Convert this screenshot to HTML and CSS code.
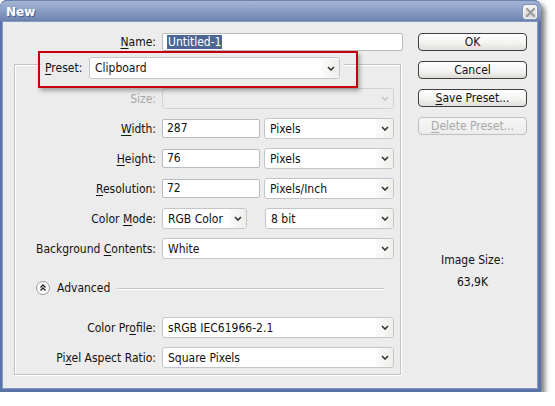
FILE: index.html
```html
<!DOCTYPE html>
<html>
<head>
<meta charset="utf-8">
<title>New</title>
<link rel="stylesheet" href="styles.css">
</head>
<body>
<div class="window">
  <div class="titlebar">
    <span class="title">New</span>
    <span class="close"><svg width="9" height="9" viewBox="0 0 9 9"><path d="M1 1L8 8M8 1L1 8" stroke="#9a9a9a" stroke-width="2" stroke-linecap="square"/></svg></span>
  </div>
  <div class="frame">
    <div class="client">
      <div class="main">
        <div class="row name-row">
          <span class="lbl name-lbl"><u>N</u>ame:</span>
          <div class="input name-input"><span class="selected">Untitled-1</span></div>
        </div>
        <div class="group">
          <div class="legend">
            <span class="preset-lbl"><u>P</u>reset:</span>
            <div class="select preset-sel"><span class="val">Clipboard</span><span class="arrow"><svg width="8" height="5" viewBox="0 0 8 5"><path d="M1 1L4 4L7 1" fill="none" stroke="#333" stroke-width="1.6"/></svg></span></div>
            <div class="annot"></div>
          </div>
          <div class="row first">
            <span class="lbl disabled">Size:</span>
            <div class="select full disabled"><span class="val"></span><span class="arrow"><svg width="8" height="5" viewBox="0 0 8 5"><path d="M1 1L4 4L7 1" fill="none" stroke="#c4c4c4" stroke-width="1.6"/></svg></span></div>
          </div>
          <div class="row">
            <span class="lbl"><u>W</u>idth:</span>
            <div class="input num">287</div>
            <div class="select unit"><span class="val">Pixels</span><span class="arrow"><svg width="8" height="5" viewBox="0 0 8 5"><path d="M1 1L4 4L7 1" fill="none" stroke="#333" stroke-width="1.6"/></svg></span></div>
          </div>
          <div class="row">
            <span class="lbl"><u>H</u>eight:</span>
            <div class="input num">76</div>
            <div class="select unit"><span class="val">Pixels</span><span class="arrow"><svg width="8" height="5" viewBox="0 0 8 5"><path d="M1 1L4 4L7 1" fill="none" stroke="#333" stroke-width="1.6"/></svg></span></div>
          </div>
          <div class="row">
            <span class="lbl"><u>R</u>esolution:</span>
            <div class="input num">72</div>
            <div class="select unit"><span class="val">Pixels/Inch</span><span class="arrow"><svg width="8" height="5" viewBox="0 0 8 5"><path d="M1 1L4 4L7 1" fill="none" stroke="#333" stroke-width="1.6"/></svg></span></div>
          </div>
          <div class="row">
            <span class="lbl">Color <u>M</u>ode:</span>
            <div class="select mode"><span class="val">RGB Color</span><span class="arrow"><svg width="8" height="5" viewBox="0 0 8 5"><path d="M1 1L4 4L7 1" fill="none" stroke="#333" stroke-width="1.6"/></svg></span></div>
            <div class="select bits"><span class="val">8 bit</span><span class="arrow"><svg width="8" height="5" viewBox="0 0 8 5"><path d="M1 1L4 4L7 1" fill="none" stroke="#333" stroke-width="1.6"/></svg></span></div>
          </div>
          <div class="row">
            <span class="lbl">Background <u>C</u>ontents:</span>
            <div class="select full"><span class="val">White</span><span class="arrow"><svg width="8" height="5" viewBox="0 0 8 5"><path d="M1 1L4 4L7 1" fill="none" stroke="#333" stroke-width="1.6"/></svg></span></div>
          </div>
          <div class="advanced">
            <span class="adv-icon"><svg width="14" height="14" viewBox="0 0 14 14"><circle cx="7" cy="7" r="6.5" fill="#fafafa" stroke="#9a9a9a"/><path d="M4.5 6.5L7 4L9.5 6.5M4.5 9.5L7 7L9.5 9.5" fill="none" stroke="#222" stroke-width="1.3"/></svg></span>
            <span class="adv-text">Advanced</span>
            <span class="adv-line"></span>
          </div>
          <div class="row adv-first">
            <span class="lbl">Color Pr<u>o</u>file:</span>
            <div class="select full"><span class="val">sRGB IEC61966-2.1</span><span class="arrow"><svg width="8" height="5" viewBox="0 0 8 5"><path d="M1 1L4 4L7 1" fill="none" stroke="#333" stroke-width="1.6"/></svg></span></div>
          </div>
          <div class="row">
            <span class="lbl">Pi<u>x</u>el Aspect Ratio:</span>
            <div class="select full"><span class="val">Square Pixels</span><span class="arrow"><svg width="8" height="5" viewBox="0 0 8 5"><path d="M1 1L4 4L7 1" fill="none" stroke="#333" stroke-width="1.6"/></svg></span></div>
          </div>
        </div>
      </div>
      <div class="side">
        <div class="btn">OK</div>
        <div class="btn">Cancel</div>
        <div class="btn"><u>S</u>ave Preset...</div>
        <div class="btn disabled"><u>D</u>elete Preset...</div>
        <div class="imgsize">Image Size:</div>
        <div class="imgval">63,9K</div>
      </div>
    </div>
  </div>
</div>
</body>
</html>
```

FILE: styles.css
```css
* { box-sizing: border-box; }
body {
  margin: 0;
  background: #fff;
  font-family: "DejaVu Sans Condensed", "DejaVu Sans", sans-serif;
  font-stretch: condensed;
  font-size: 12px;
  line-height: 14px;
  color: #111;
}
u { text-decoration: underline; text-underline-offset: 2px; }

.window {
  width: 541px;
  height: 392px;
  display: flex;
  flex-direction: column;
  border-radius: 7px 7px 0 0;
  box-shadow: 4px 4px 5px rgba(0,0,0,0.5);
  background: #5a72a5;
}
.titlebar {
  height: 22px;
  flex: none;
  border-radius: 7px 7px 0 0;
  background: linear-gradient(#a4b4d4, #8c9fc4 45%, #6f85b2 90%, #5c73a4);
  border-top: 1px solid #6a80ad;
  display: flex;
  align-items: center;
  padding: 0 4px 0 6px;
}
.title {
  flex: 1;
  color: #fff;
  font-family: "DejaVu Sans", sans-serif;
  font-stretch: normal;
  font-weight: bold;
  font-size: 12px;
  text-shadow: 1px 1px 0 #4a6090;
}
.close {
  width: 14px;
  height: 14px;
  margin-top: 1px;
  border: 1px solid #f4f4f4;
  outline: 1px solid #8192b5;
  border-radius: 2px;
  background: linear-gradient(#f2f2f2, #d9d9d9);
  display: flex;
  align-items: center;
  justify-content: center;
}
.frame {
  flex: 1;
  display: flex;
  padding: 0 4px 4px 3px;
}
.client {
  flex: 1;
  background: #ececec;
  box-shadow: 0 0 0 1px #8799c0;
  display: flex;
  padding: 11px 9px 0 11px;
}
.main { width: 389px; }

.row {
  display: flex;
  align-items: center;
  height: 21px;
  margin-top: 9px;
}
.lbl {
  width: 141px;
  text-align: right;
  margin-right: 6px;
  white-space: nowrap;
}
.lbl.disabled { color: #a6a6a6; }
.name-row { margin-top: 0; height: 18px; }
.name-lbl { width: 142px; }

.input {
  height: 19px;
  background: #fff;
  border: 1px solid #b7bcc2;
  border-radius: 2px;
  padding: 1px 0 0 4px;
  white-space: nowrap;
}
.name-input { width: 241px; height: 18px; padding-top: 1px; }
.selected { background: #4b6693; color: #fff; padding: 0 1px; }
.num { width: 98px; margin-right: 4px; }

.select {
  height: 21px;
  background: #fff;
  border: 1px solid #c2c5c9;
  border-radius: 3px;
  display: flex;
  align-items: center;
  padding-left: 5px;
  overflow: hidden;
}
.select .val { flex: 1; white-space: nowrap; }
.select .arrow {
  width: 17px;
  height: 19px;
  display: flex;
  align-items: center;
  justify-content: center;
  background: linear-gradient(90deg, #fbfbfb, #eeeeea);
}
.select.disabled { background: #ececec; border-color: #d3d3d3; }
.select.disabled .arrow { background: #ececec; }
.full { width: 232px; }
.unit { width: 130px; }
.mode { width: 85px; margin-right: 18px; }
.bits { width: 129px; }

.group {
  margin-top: 13px;
  width: 387px;
  border: 1px solid #c4c4c4;
  box-shadow: 1px 1px 0 #fff, inset 1px 1px 0 #fff;
  padding-bottom: 6px;
}
.legend {
  position: relative;
  margin: -8px 0 0 26px;
  padding: 0 4px;
  width: fit-content;
  height: 22px;
  display: flex;
  align-items: center;
  background: #ececec;
}
.preset-lbl { width: 38px; margin-right: 6px; white-space: nowrap; }
.preset-sel { width: 251px; height: 22px; }
.annot {
  position: absolute;
  left: -3px;
  top: -6px;
  width: 320px;
  height: 37px;
  border: 2px solid #c4000b;
  box-shadow: 2px 3px 4px rgba(0,0,0,0.3);
}
.row.first { margin-top: 9px; }

.advanced {
  display: flex;
  align-items: center;
  height: 14px;
  margin: 22px 16px 0 21px;
}
.adv-icon { width: 14px; height: 14px; display: flex; }
.adv-text { margin: 0 7px; }
.adv-line { flex: 1; height: 1px; background: #c4c4c4; box-shadow: 0 1px 0 #fff; }
.row.adv-first { margin-top: 22px; }

.side {
  width: 109px;
  margin-left: 15px;
  display: flex;
  flex-direction: column;
}
.btn {
  height: 18px;
  margin-bottom: 10px;
  border: 1px solid #3f3f3f;
  border-radius: 4px;
  background: linear-gradient(#ffffff, #f2f2f0 60%, #dedcd6);
  text-align: center;
  line-height: 16px;
}
.btn.disabled {
  border-color: #c0c0c0;
  color: #a8a8a8;
  background: linear-gradient(#f6f6f6, #ececec);
}
.imgsize { margin-top: 108px; text-align: center; }
.imgval { margin-top: 8px; text-align: center; }
```
